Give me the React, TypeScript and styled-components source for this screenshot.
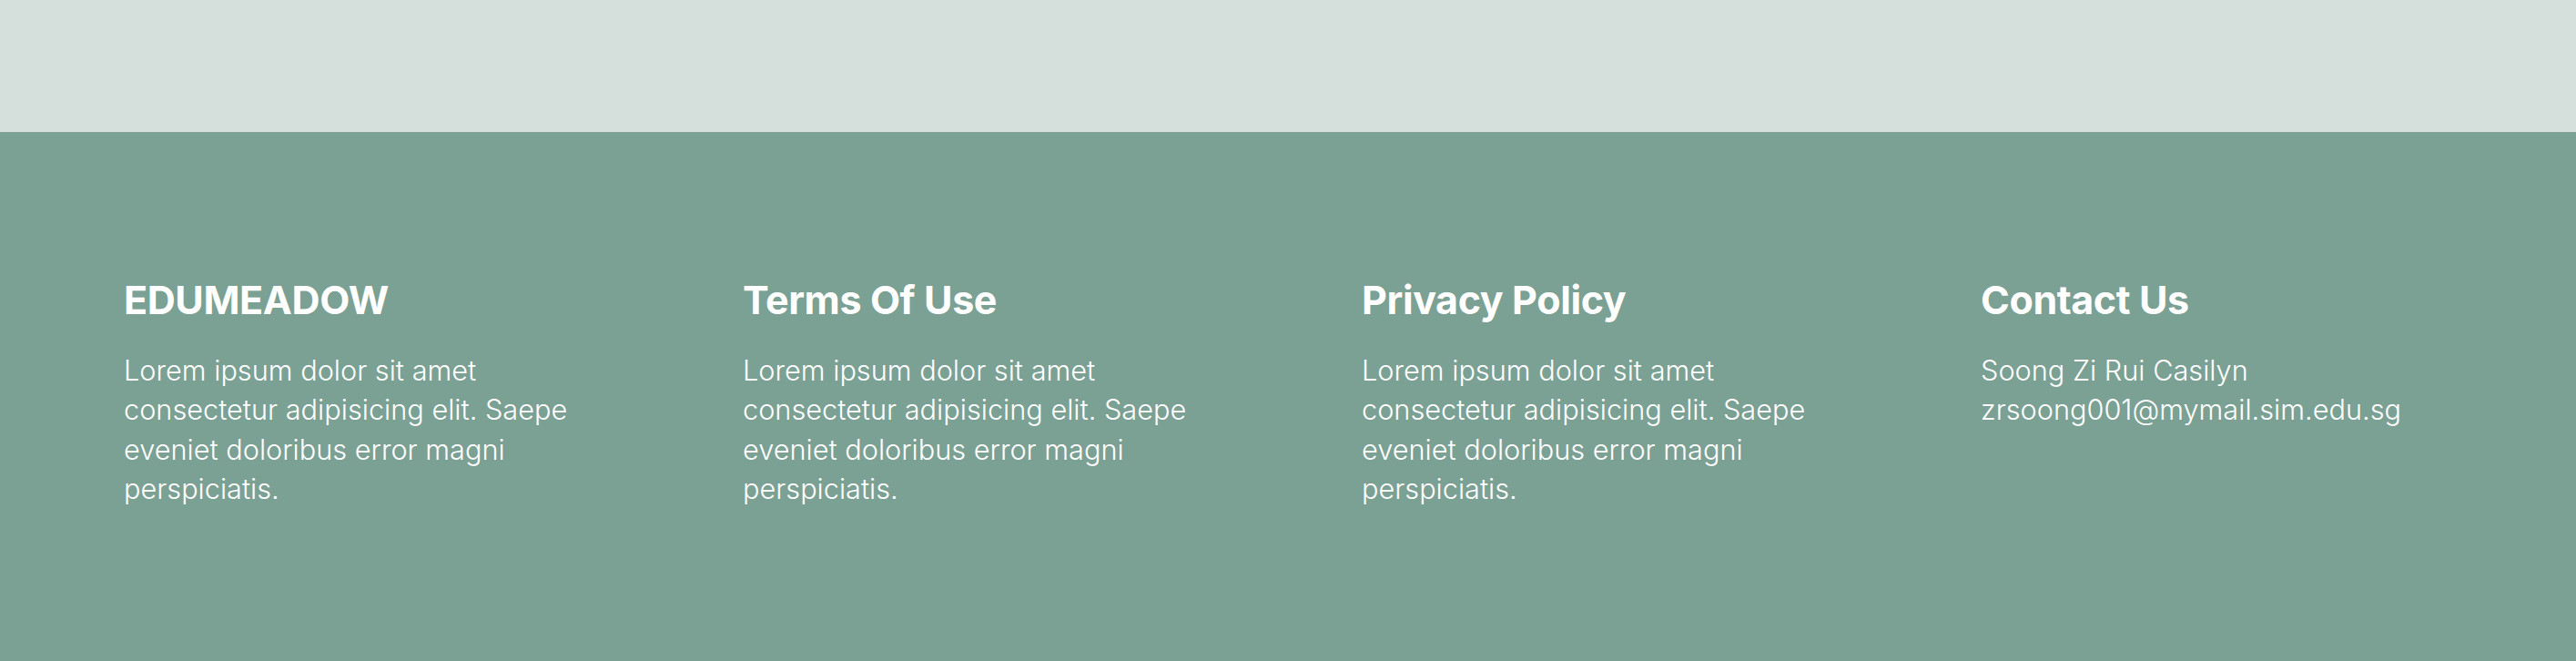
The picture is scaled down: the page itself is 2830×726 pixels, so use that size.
import React from "react";
import styled, { createGlobalStyle } from "styled-components";

const GlobalStyle = createGlobalStyle`
  html, body {
    margin: 0;
    padding: 0;
  }
  body {
    font-family: Inter, "Liberation Sans", sans-serif;
    background: #7ba094;
  }
  * {
    box-sizing: border-box;
  }
`;

const Page = styled.div`
  display: flex;
  flex-direction: column;
  min-height: 100vh;
`;

const TopBand = styled.div`
  height: 145px;
  background: #d5dfdc;
`;

const Footer = styled.footer`
  flex: 1;
  background: #7ba094;
  padding: 158px 136px 80px;
`;

const Columns = styled.div`
  display: grid;
  grid-template-columns: repeat(4, 1fr);
  column-gap: 162px;
`;

const Column = styled.div`
  display: flex;
  flex-direction: column;
`;

const Heading = styled.h3`
  margin: 0 0 30px;
  font-family: Inter, "Liberation Sans", sans-serif;
  font-weight: 700;
  font-size: 43px;
  line-height: 52px;
  color: #ffffff;
  letter-spacing: -0.4px;
`;

const Text = styled.p`
  margin: 0;
  font-family: Inter, "Liberation Sans", sans-serif;
  font-weight: 300;
  font-size: 30.7px;
  line-height: 43.3px;
  color: #ffffff;
`;

const lorem =
  "Lorem ipsum dolor sit amet consectetur adipisicing elit. Saepe eveniet doloribus error magni perspiciatis.";

const columns = [
  { title: "EDUMEADOW", lines: [lorem] },
  { title: "Terms Of Use", lines: [lorem] },
  { title: "Privacy Policy", lines: [lorem] },
  { title: "Contact Us", lines: ["Soong Zi Rui Casilyn", "zrsoong001@mymail.sim.edu.sg"] },
];

export default function App() {
  return (
    <>
      <GlobalStyle />
      <Page>
        <TopBand />
        <Footer>
          <Columns>
            {columns.map((c) => (
              <Column key={c.title}>
                <Heading>{c.title}</Heading>
                {c.lines.map((l) => (
                  <Text key={l}>{l}</Text>
                ))}
              </Column>
            ))}
          </Columns>
        </Footer>
      </Page>
    </>
  );
}
